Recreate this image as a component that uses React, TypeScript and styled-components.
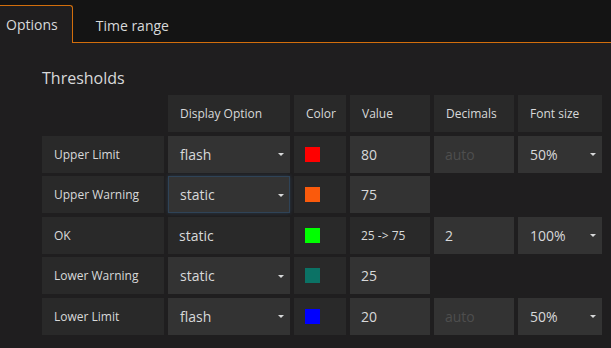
import React from "react";
import styled, { createGlobalStyle } from "styled-components";

const GlobalStyle = createGlobalStyle`
  html, body {
    margin: 0;
    padding: 0;
    background: #1f1e1f;
    font-family: "Open Sans", "Liberation Sans", sans-serif;
    color: #d8d9da;
  }
`;

const Page = styled.div`
  width: 611px;
  height: 348px;
  overflow: hidden;
  background: #1f1e1f;
`;

const TabBar = styled.div`
  height: 42px;
  background: #141414;
  border-bottom: 1px solid #d26e0c;
  display: flex;
  align-items: flex-end;
  padding-left: 0;
`;

const Tab = styled.div<{ $active?: boolean }>`
  height: 37px;
  box-sizing: border-box;
  padding: 0 14px;
  margin-right: 8px;
  display: flex;
  align-items: center;
  font-size: 14px;
  color: #d8d9da;
  border: 1px solid ${(p) => (p.$active ? "#d26e0c" : "transparent")};
  border-bottom: none;
  border-radius: 0 3px 0 0;
  background: ${(p) => (p.$active ? "#1f1e1f" : "transparent")};
  margin-bottom: -1px;
  height: ${(p) => (p.$active ? "38px" : "37px")};

  &:first-child {
    margin-left: -9px;
  }
`;

const Content = styled.div`
  padding: 25px 0 0 42px;
`;

const Title = styled.h3`
  margin: 0 0 7px;
  font-size: 16px;
  line-height: 20px;
  font-weight: 400;
  color: #d8d9da;
`;

const Grid = styled.div`
  display: grid;
  grid-template-columns: 122px 122px 52px 80px 80px 84px;
  grid-auto-rows: 37px;
  column-gap: 4px;
  row-gap: 3.6px;
`;

const Cell = styled.div<{ $tone?: "label" | "input" | "none" }>`
  box-sizing: border-box;
  display: flex;
  align-items: center;
  padding: 0 11px;
  position: relative;
  background: ${(p) =>
    p.$tone === "input" ? "#333333" : p.$tone === "none" ? "transparent" : "#292929"};
  white-space: nowrap;
`;

const HeaderCell = styled(Cell)`
  font-size: 12px;
  padding-left: 12px;
`;

const LabelCell = styled(Cell)`
  font-size: 12px;
  padding-left: 12px;
`;

const TextCell = styled(Cell)<{ $small?: boolean; $muted?: boolean }>`
  font-size: ${(p) => (p.$small ? "12px" : "14px")};
  color: ${(p) => (p.$muted ? "#4e4e4e" : "#d8d9da")};
  padding-left: ${(p) => (p.$small ? "11px" : "11px")};
`;

const SelectCell = styled(TextCell)<{ $focused?: boolean }>`
  border: 1px solid ${(p) => (p.$focused ? "#2f4357" : "transparent")};
  box-shadow: ${(p) => (p.$focused ? "0 0 4px rgba(82, 146, 210, 0.25)" : "none")};
  padding-left: 11px;

  &::after {
    content: "";
    position: absolute;
    right: 5px;
    top: 50%;
    margin-top: -1px;
    border-left: 3px solid transparent;
    border-right: 3px solid transparent;
    border-top: 3px solid #d8d9da;
  }
`;

const Swatch = styled.span<{ $color: string }>`
  display: block;
  width: 15px;
  height: 15px;
  background: ${(p) => p.$color};
`;

const SwatchCell = styled(Cell)`
  padding-left: 11px;
`;

type Row = {
  label: string;
  display: string;
  displaySelect: boolean;
  focused?: boolean;
  color: string;
  value: string;
  valueInput: boolean;
  decimals?: string;
  fontSize?: string;
};

const rows: Row[] = [
  { label: "Upper Limit", display: "flash", displaySelect: true, color: "#ff0000", value: "80", valueInput: true, decimals: "", fontSize: "50%" },
  { label: "Upper Warning", display: "static", displaySelect: true, focused: true, color: "#fa5a0c", value: "75", valueInput: true },
  { label: "OK", display: "static", displaySelect: false, color: "#00ff00", value: "25 -> 75", valueInput: false, decimals: "2", fontSize: "100%" },
  { label: "Lower Warning", display: "static", displaySelect: true, color: "#0b7265", value: "25", valueInput: true },
  { label: "Lower Limit", display: "flash", displaySelect: true, color: "#0000ff", value: "20", valueInput: true, decimals: "", fontSize: "50%" },
];

const headers = ["", "Display Option", "Color", "Value", "Decimals", "Font size"];

const App = () => {
  return (
    <Page>
      <GlobalStyle />
      <TabBar>
        <Tab $active>Options</Tab>
        <Tab>Time range</Tab>
      </TabBar>
      <Content>
        <Title>Thresholds</Title>
        <Grid>
          {headers.map((h, i) => (
            <HeaderCell key={`h_${i}`} $tone={h ? "label" : "none"}>
              {h}
            </HeaderCell>
          ))}
          {rows.map((row) => (
            <React.Fragment key={row.label}>
              <LabelCell>{row.label}</LabelCell>
              {row.displaySelect ? (
                <SelectCell $tone="input" $focused={row.focused}>
                  {row.display}
                </SelectCell>
              ) : (
                <TextCell>{row.display}</TextCell>
              )}
              <SwatchCell>
                <Swatch $color={row.color} />
              </SwatchCell>
              {row.valueInput ? (
                <TextCell $tone="input">{row.value}</TextCell>
              ) : (
                <TextCell $small>{row.value}</TextCell>
              )}
              {row.decimals !== undefined ? (
                <TextCell $tone="input" $muted={!row.decimals}>
                  {row.decimals || "auto"}
                </TextCell>
              ) : (
                <Cell $tone="none" />
              )}
              {row.fontSize ? (
                <SelectCell $tone="input">{row.fontSize}</SelectCell>
              ) : (
                <Cell $tone="none" />
              )}
            </React.Fragment>
          ))}
        </Grid>
      </Content>
    </Page>
  );
};

export default App;
